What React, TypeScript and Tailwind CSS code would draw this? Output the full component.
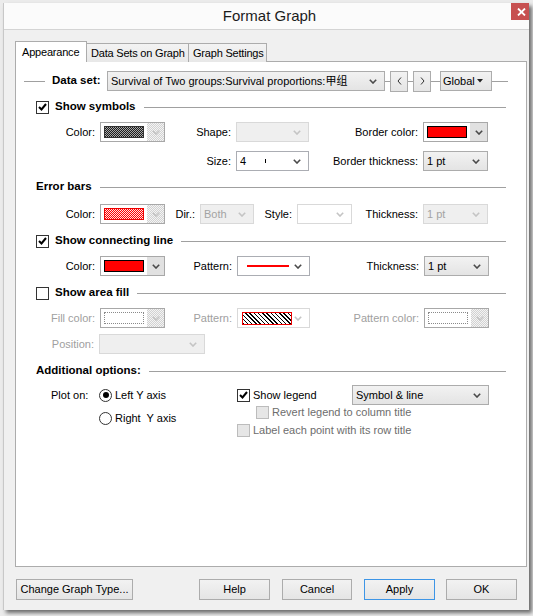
import React from 'react';

type Kind = 'button' | 'edit' | 'off' | 'offWhite';

const DITHER_LIGHT =
  'bg-[image:repeating-conic-gradient(#d2d2d2_0%_25%,#f4f4f4_0%_50%)] bg-[length:2px_2px]';

const FILLS: Record<string, string> = {
  dark: 'border border-[#333] bg-[image:repeating-conic-gradient(#1e1e1e_0%_25%,#a8a8a8_0%_50%)] bg-[length:2px_2px]',
  redDither:
    'border border-[#e00] bg-[image:repeating-conic-gradient(#ff0000_0%_25%,#ffe0e0_0%_50%)] bg-[length:2px_2px]',
  red: 'border border-black bg-[#ff0000]',
  dotted: 'border border-dotted border-[#8a8a8a] bg-white',
};

function Arrow({ dim }: { dim?: boolean }) {
  return (
    <svg width="8" height="5" viewBox="0 0 8 5" className="shrink-0">
      <polyline
        points="0.8,0.8 4,4 7.2,0.8"
        fill="none"
        stroke={dim ? '#c4c4c4' : '#4a4a4a'}
        strokeWidth="1.6"
      />
    </svg>
  );
}

function Select({ w, kind = 'button', children }: { w: string; kind?: Kind; children?: React.ReactNode }) {
  const skin = {
    button: 'border-[#acacac] bg-linear-to-b from-[#f2f2f2] to-[#e4e4e4] text-black',
    edit: 'border-[#abadb3] bg-white text-black',
    off: 'border-[#d9d9d9] bg-[#efefef] text-[#a3a3a3]',
    offWhite: 'border-[#d9d9d9] bg-white text-[#a3a3a3]',
  }[kind];
  return (
    <div className={`${w} h-[20px] shrink-0 border ${skin} flex items-center pl-[3px] pr-[7px]`}>
      <div className="flex-1 min-w-0 flex items-center overflow-hidden whitespace-nowrap">{children}</div>
      <Arrow dim={kind === 'off' || kind === 'offWhite'} />
    </div>
  );
}

function Swatch({ fill, on }: { fill: string; on?: boolean }) {
  return (
    <div className="w-[65px] h-[20px] shrink-0 border border-[#a8a8a8] bg-white flex">
      <div className="flex-1 p-[3px]">
        <div className={`w-full h-full ${FILLS[fill]}`} />
      </div>
      <div className={`w-[17px] flex items-center justify-center ${on ? 'bg-[#e1e1e1]' : DITHER_LIGHT}`}>
        <Arrow dim={!on} />
      </div>
    </div>
  );
}

function Check({ checked, off }: { checked?: boolean; off?: boolean }) {
  return (
    <span
      className={`w-[13px] h-[13px] border flex items-center justify-center shrink-0 ${
        off ? 'border-[#bcbcbc] bg-[#e6e6e6]' : 'border-[#333] bg-white'
      }`}
    >
      {checked && (
        <svg width="9" height="8" viewBox="0 0 9 8">
          <polyline points="1,4 3.5,6.5 8,1" fill="none" stroke="#000" strokeWidth="2" />
        </svg>
      )}
    </span>
  );
}

function Radio({ on }: { on?: boolean }) {
  return (
    <span className="w-[13px] h-[13px] rounded-full border border-[#333] bg-white flex items-center justify-center shrink-0">
      {on && <span className="w-[6px] h-[6px] rounded-full bg-black" />}
    </span>
  );
}

function Header({ check, checked, children }: { check?: boolean; checked?: boolean; children: React.ReactNode }) {
  return (
    <div className="h-[14px] flex items-center">
      {check && <Check checked={checked} />}
      <span className={`text-[11.5px] font-bold whitespace-nowrap ${check ? 'ml-[6px]' : ''}`}>{children}</span>
      <div className="flex-1 h-px bg-[#a0a0a0] ml-[8px]" />
    </div>
  );
}

function Lbl({ w, off, children }: { w: string; off?: boolean; children: React.ReactNode }) {
  return (
    <span className={`${w} shrink-0 text-right pr-[5px] whitespace-nowrap ${off ? 'text-[#a0a0a0]' : ''}`}>
      {children}
    </span>
  );
}

function Btn({ w, blue, children }: { w: string; blue?: boolean; children: React.ReactNode }) {
  return (
    <div
      className={`${w} h-[21px] shrink-0 border ${
        blue ? 'border-[#3d95e6]' : 'border-[#acacac]'
      } bg-linear-to-b from-[#f2f2f2] to-[#e5e5e5] flex items-center justify-center whitespace-nowrap`}
    >
      {children}
    </div>
  );
}

function Dash({ w }: { w: string }) {
  return <div className={`${w} h-px bg-[#a0a0a0] shrink-0`} />;
}

function Chevron({ left }: { left?: boolean }) {
  return (
    <svg width="5" height="8" viewBox="0 0 5 8">
      <polyline points={left ? '4,0.5 1,4 4,7.5' : '1,0.5 4,4 1,7.5'} fill="none" stroke="#333" strokeWidth="1" />
    </svg>
  );
}

export default function App() {
  return (
    <div className="w-[533px] h-[616px] overflow-hidden bg-[#ececec] pl-[3px] pt-[3px] font-['Liberation_Sans','Noto_Sans_CJK_SC',sans-serif] text-[11px] text-black">
      <div className="w-[526px] h-[607px] bg-[#f0f0f0] border-l border-[#c8c8c8] shadow-[3px_3px_4px_rgba(0,0,0,0.55)] flex flex-col">
        {/* title bar */}
        <div className="relative h-[27px] shrink-0 bg-[#fbfbfb] border-b border-[#d4d4d4] flex items-center justify-center pl-[6px]">
          <span className="text-[15px] text-[#1b1b1b]">Format Graph</span>
          <div className="absolute right-0 top-0 w-[18px] h-[17px] bg-[#c75050] flex items-center pl-[6px] overflow-hidden">
            <svg width="12" height="8" viewBox="0 0 12 8" className="shrink-0">
              <path d="M1 0.5 L8 7.5 M8 0.5 L1 7.5" stroke="#fff" strokeWidth="1.8" />
            </svg>
          </div>
        </div>

        <div className="pl-[11px] pt-[11px]">
          {/* tabs */}
          <div className="h-[21px] flex items-end whitespace-nowrap">
            <div className="relative z-10 w-[72px] h-[21px] border-t border-l border-r border-[#acacac] bg-white pl-[6px] flex items-center tracking-[-0.2px]">
              Appearance
            </div>
            <div className="w-[102px] h-[19px] border-t border-r border-[#acacac] bg-linear-to-b from-[#f3f3f3] to-[#e8e8e8] flex items-center pl-[4px] tracking-[-0.2px]">
              Data Sets on Graph
            </div>
            <div className="w-[78px] h-[19px] border-t border-r border-[#acacac] bg-linear-to-b from-[#f3f3f3] to-[#e8e8e8] flex items-center pl-[4px] tracking-[-0.2px]">
              Graph Settings
            </div>
          </div>

          {/* panel */}
          <div className="-mt-px w-[512px] h-[506px] border border-[#acacac] bg-white pt-[9px]">
            <div className="h-[20px] flex items-center pl-[8px]">
              <Dash w="w-[21px]" />
              <span className="w-[55px] ml-[7px] shrink-0 text-[11.5px] font-bold">Data set:</span>
              <Select w="w-[278px]">
                <span>Survival of Two groups:Survival proportions:甲组</span>
              </Select>
              <Dash w="w-[5px]" />
              <Btn w="w-[18px] h-[20px]">
                <Chevron left />
              </Btn>
              <Dash w="w-[5px]" />
              <Btn w="w-[18px] h-[20px]">
                <Chevron />
              </Btn>
              <Dash w="w-[9px]" />
              <div className="w-[52px] h-[20px] shrink-0 border border-[#acacac] bg-linear-to-b from-[#f2f2f2] to-[#e4e4e4] flex items-center pl-[2px]">
                <span className="flex-1">Global</span>
                <svg width="6" height="4" viewBox="0 0 6 4" className="mr-[8px]">
                  <polygon points="0,0 6,0 3,3.5" fill="#222" />
                </svg>
              </div>
              <Dash w="w-[16px]" />
            </div>

            <div className="px-[20px]">
              <div className="mt-[9px]">
                <Header check checked>
                  Show symbols
                </Header>
              </div>
              <div className="mt-[8px] h-[20px] flex items-center">
                <Lbl w="w-[64px]">Color:</Lbl>
                <Swatch fill="dark" />
                <Lbl w="w-[71px]">Shape:</Lbl>
                <Select w="w-[73px]" kind="off" />
                <Lbl w="w-[114px]">Border color:</Lbl>
                <Swatch fill="red" on />
              </div>
              <div className="mt-[9px] h-[20px] flex items-center">
                <Lbl w="w-[200px]">Size:</Lbl>
                <Select w="w-[73px]" kind="edit">
                  <span>4</span>
                  <span className="ml-[19px] w-px h-[4px] bg-black" />
                </Select>
                <Lbl w="w-[114px]">Border thickness:</Lbl>
                <Select w="w-[65px]">1 pt</Select>
              </div>

              <div className="mt-[9px]">
                <Header>Error bars</Header>
              </div>
              <div className="mt-[10px] h-[20px] flex items-center">
                <Lbl w="w-[64px]">Color:</Lbl>
                <Swatch fill="redDither" />
                <Lbl w="w-[35px]">Dir.:</Lbl>
                <Select w="w-[54px]" kind="off">
                  Both
                </Select>
                <Lbl w="w-[43px]">Style:</Lbl>
                <Select w="w-[55px]" kind="offWhite" />
                <Lbl w="w-[71px]">Thickness:</Lbl>
                <Select w="w-[65px]" kind="off">
                  1 pt
                </Select>
              </div>

              <div className="mt-[10px]">
                <Header check checked>
                  Show connecting line
                </Header>
              </div>
              <div className="mt-[8px] h-[20px] flex items-center">
                <Lbl w="w-[64px]">Color:</Lbl>
                <Swatch fill="red" on />
                <Lbl w="w-[72px]">Pattern:</Lbl>
                <Select w="w-[73px]" kind="edit">
                  <span className="ml-[6px] w-[42px] h-[2px] bg-[#ff0000]" />
                </Select>
                <Lbl w="w-[114px]">Thickness:</Lbl>
                <Select w="w-[65px]">1 pt</Select>
              </div>

              <div className="mt-[10px]">
                <Header check>Show area fill</Header>
              </div>
              <div className="mt-[8px] h-[20px] flex items-center">
                <Lbl w="w-[64px]" off>
                  Fill color:
                </Lbl>
                <Swatch fill="dotted" />
                <Lbl w="w-[72px]" off>
                  Pattern:
                </Lbl>
                <Select w="w-[73px]" kind="offWhite">
                  <span className="ml-[1px] w-[50px] h-[13px] border border-[#e00] bg-[image:repeating-linear-gradient(45deg,#000_0px_1px,#fff_1px_3px)]" />
                </Select>
                <Lbl w="w-[114px]" off>
                  Pattern color:
                </Lbl>
                <Swatch fill="dotted" />
              </div>
              <div className="mt-[6px] h-[20px] flex items-center">
                <Lbl w="w-[63px]" off>
                  Position:
                </Lbl>
                <Select w="w-[106px]" kind="off" />
              </div>

              <div className="mt-[10px]">
                <Header>Additional options:</Header>
              </div>
              <div className="mt-[7px] flex">
                <div className="w-[201px] shrink-0">
                  <div className="h-[20px] flex items-center">
                    <span className="w-[63px] pl-[15px] shrink-0">Plot on:</span>
                    <Radio on />
                    <span className="ml-[3px]">Left Y axis</span>
                  </div>
                  <div className="mt-[3px] h-[20px] flex items-center pl-[63px]">
                    <Radio />
                    <span className="ml-[3px] whitespace-pre">Right  Y axis</span>
                  </div>
                </div>
                <div className="flex-1">
                  <div className="h-[20px] flex items-center">
                    <Check checked />
                    <span className="w-[102px] pl-[3px] shrink-0">Show legend</span>
                    <Select w="w-[137px]">Symbol &amp; line</Select>
                  </div>
                  <div className="h-[14px] flex items-center pl-[19px]">
                    <Check off />
                    <span className="pl-[3px] text-[#6d6d6d]">Revert legend to column title</span>
                  </div>
                  <div className="mt-[4px] h-[14px] flex items-center">
                    <Check off />
                    <span className="pl-[3px] text-[#6d6d6d]">Label each point with its row title</span>
                  </div>
                </div>
              </div>
            </div>
          </div>

          {/* bottom buttons */}
          <div className="mt-[12px] w-[512px] flex items-center pl-[1px] pr-[10px]">
            <Btn w="w-[117px]">Change Graph Type...</Btn>
            <div className="flex-1" />
            <Btn w="w-[71px]">Help</Btn>
            <div className="w-[12px]" />
            <Btn w="w-[70px]">Cancel</Btn>
            <div className="w-[12px]" />
            <Btn w="w-[71px]" blue>
              Apply
            </Btn>
            <div className="w-[11px]" />
            <Btn w="w-[71px]">OK</Btn>
          </div>
        </div>
      </div>
    </div>
  );
}
